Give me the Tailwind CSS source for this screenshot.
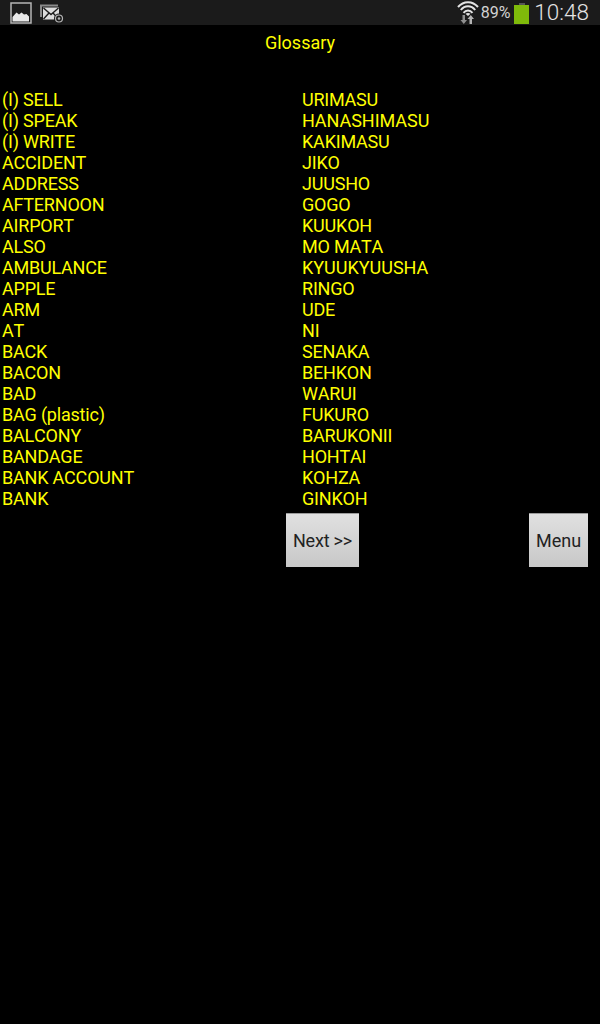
<!DOCTYPE html>
<html lang="en">
<head>
    <meta charset="UTF-8">
    <title>Glossary</title>
    <script src="https://cdn.jsdelivr.net/npm/@tailwindcss/browser@4"></script>
</head>
<body class="bg-black font-['Roboto',sans-serif]">
    <div class="w-[600px] h-[1024px] bg-black overflow-hidden">
        <!-- Status bar -->
        <div class="h-[25px] bg-[#1b1b1b] flex items-center justify-between">
            <div class="flex items-center">
                <svg class="ml-[10px]" width="22" height="22" viewBox="0 0 22 22">
                    <rect x="1" y="1" width="20" height="20" fill="none" stroke="#b5b5b5" stroke-width="1.500"/>
                    <path d="M2.500 19.500V15L6.500 10.500L9 12.500L11.500 10.500L14 12.500L16.500 12L19 14.500V19.500Z" fill="#e8e8e8"/>
                </svg>
                <svg class="ml-[8px]" width="25" height="22" viewBox="0 0 25 22">
                    <path d="M0 2.500H18V4.500H2V15H0Z" fill="#8a8a8a"/>
                    <rect x="3" y="5.500" width="16" height="12" fill="#dcdcdc"/>
                    <path d="M3.500 6L11 12.500L18.500 6M3.500 17L9 11M18.500 17L13 11" fill="none" stroke="#1b1b1b" stroke-width="1.400"/>
                    <circle cx="19" cy="16.500" r="5" fill="#1b1b1b"/>
                    <circle cx="19" cy="16.500" r="3.500" fill="none" stroke="#b5b5b5" stroke-width="1.200"/>
                    <circle cx="19" cy="16.500" r="1.300" fill="#b5b5b5"/>
                </svg>
            </div>
            <div class="flex items-center">
                <svg width="22" height="25" viewBox="0 0 22 25">
                    <path d="M1 7C6.500 0.500 15.500 0.500 21 7M3.800 10C7.800 5 14.200 5 18.200 10M6.500 12.800C9 9.800 13 9.800 15.500 12.800" fill="none" stroke="#e4e4e4" stroke-width="2"/>
                    <path d="M11 16L8.500 13.800C10 12.600 12 12.600 13.500 13.800Z" fill="#e4e4e4"/>
                    <path d="M5.500 15V20H3.500L6.800 24L10 20H8V15Z" fill="#8f8f8f"/>
                    <path d="M12.500 24V19H10.500L13.800 15L17 19H15V24Z" fill="#b5b5b5"/>
                </svg>
                <span class="ml-[2px] text-[16px] leading-[25px] text-[#d2d2d2]">89%</span>
                <div class="ml-[4px] mt-[1px] flex flex-col items-center">
                    <div class="w-[6px] h-[2px] bg-[#555]"></div>
                    <div class="w-[15px] h-[19px] bg-[#7fba0a]"></div>
                </div>
                <span class="ml-[5px] mr-[11px] text-[22.500px] font-light leading-[25px] text-[#e4e4e4]">10:48</span>
            </div>
        </div>

        <!-- Title -->
        <h1 class="h-[36px] mt-[1px] text-center text-[18px] leading-[34px] font-normal text-[#ffff00]">Glossary</h1>

        <!-- Word list -->
        <div class="mt-[27px] grid grid-cols-[300px_300px] auto-rows-[21px] text-[18px] leading-[21px] tracking-[-0.2px] [font-kerning:none] text-[#ffff00]">
            <div class="pl-[2px]">(I) SELL</div><div class="pl-[2px]">URIMASU</div>
            <div class="pl-[2px]">(I) SPEAK</div><div class="pl-[2px] tracking-normal">HANASHIMASU</div>
            <div class="pl-[2px]">(I) WRITE</div><div class="pl-[2px]">KAKIMASU</div>
            <div class="pl-[2px]">ACCIDENT</div><div class="pl-[2px]">JIKO</div>
            <div class="pl-[2px]">ADDRESS</div><div class="pl-[2px]">JUUSHO</div>
            <div class="pl-[2px]">AFTERNOON</div><div class="pl-[2px]">GOGO</div>
            <div class="pl-[2px]">AIRPORT</div><div class="pl-[2px]">KUUKOH</div>
            <div class="pl-[2px]">ALSO</div><div class="pl-[2px]">MO MATA</div>
            <div class="pl-[2px]">AMBULANCE</div><div class="pl-[2px] tracking-normal">KYUUKYUUSHA</div>
            <div class="pl-[2px]">APPLE</div><div class="pl-[2px]">RINGO</div>
            <div class="pl-[2px]">ARM</div><div class="pl-[2px]">UDE</div>
            <div class="pl-[2px]">AT</div><div class="pl-[2px]">NI</div>
            <div class="pl-[2px]">BACK</div><div class="pl-[2px]">SENAKA</div>
            <div class="pl-[2px]">BACON</div><div class="pl-[2px]">BEHKON</div>
            <div class="pl-[2px]">BAD</div><div class="pl-[2px]">WARUI</div>
            <div class="pl-[2px]">BAG (plastic)</div><div class="pl-[2px]">FUKURO</div>
            <div class="pl-[2px]">BALCONY</div><div class="pl-[2px]">BARUKONII</div>
            <div class="pl-[2px]">BANDAGE</div><div class="pl-[2px]">HOHTAI</div>
            <div class="pl-[2px]">BANK ACCOUNT</div><div class="pl-[2px]">KOHZA</div>
            <div class="pl-[2px]">BANK</div><div class="pl-[2px]">GINKOH</div>
        </div>

        <!-- Buttons -->
        <div class="mt-[4px] flex pl-[286px]">
            <button class="w-[73px] h-[54px] border-t border-[#9a9a9a] bg-gradient-to-b from-[#e0e0e0] to-[#c8c8c8] text-[18px] tracking-[-0.2px] text-[#222]">Next &gt;&gt;</button>
            <button class="ml-[170px] w-[59px] h-[54px] border-t border-[#9a9a9a] bg-gradient-to-b from-[#e0e0e0] to-[#c8c8c8] text-[18px] text-[#222]">Menu</button>
        </div>
    </div>
</body>
</html>
